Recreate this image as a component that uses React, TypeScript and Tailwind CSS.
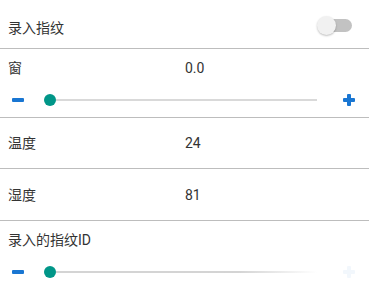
import React from 'react';

const font = "font-['Roboto','Noto_Sans_CJK_SC',sans-serif]";

const Minus: React.FC = () => (
  <div className="w-[12px] h-[4px] rounded-[1px] bg-[#1976d2]" />
);

const Plus: React.FC<{ faded?: boolean }> = ({ faded }) => (
  <svg width="12" height="12" viewBox="0 0 12 12" className={faded ? 'opacity-5' : ''}>
    <rect x="4" y="0" width="4" height="12" rx="1" fill="#1976d2" />
    <rect x="0" y="4" width="12" height="4" rx="1" fill="#1976d2" />
  </svg>
);

const Slider: React.FC<{ faded?: boolean }> = ({ faded }) => (
  <div className="flex items-center h-[16px] pl-[12px] pr-[14px]">
    <Minus />
    <div className="flex-1 flex items-center ml-[20px] mr-[26px]">
      <div className="w-[12px] h-[12px] rounded-full bg-[#009688] shrink-0" />
      <div
        className={`flex-1 h-[2px] ${
          faded ? 'bg-gradient-to-r from-[#d4d4d4] from-70% to-transparent' : 'bg-[#d9d9d9]'
        }`}
      />
    </div>
    <Plus faded={faded} />
  </div>
);

const ValueRow: React.FC<{ label: string; value: string; h: string }> = ({ label, value, h }) => (
  <div className={`flex items-center border-b border-[#bdbdbd] ${h}`}>
    <div className="w-[185px] pl-[8px]">{label}</div>
    <div>{value}</div>
  </div>
);

export default function App() {
  return (
    <div className={`w-[369px] h-[287px] overflow-hidden bg-white text-[14px] leading-[20px] text-[#333333] ${font}`}>
      {/* 录入指纹 switch */}
      <div className="flex items-center justify-between h-[49px] pt-[8px] pl-[8px] pr-[17px] border-b border-[#bdbdbd]">
        <div>录入指纹</div>
        <div className="relative w-[35px] h-[20px] -mt-[6px] flex items-center">
          <div className="absolute right-0 w-[26px] h-[13px] rounded-full bg-[#c2c2c2]" />
          <div className="absolute left-0 w-[19px] h-[19px] rounded-full bg-[#f1f1f1] shadow-[0_1px_2px_rgba(0,0,0,0.25)]" />
        </div>
      </div>

      {/* 窗 */}
      <div className="h-[69px] pt-[9px] border-b border-[#bdbdbd]">
        <div className="flex">
          <div className="w-[185px] pl-[8px]">窗</div>
          <div>0.0</div>
        </div>
        <div className="mt-[14px]">
          <Slider />
        </div>
      </div>

      <ValueRow label="温度" value="24" h="h-[51px]" />
      <ValueRow label="湿度" value="81" h="h-[52px]" />

      {/* 录入的指纹ID */}
      <div className="pt-[9px]">
        <div className="pl-[8px]">录入的指纹ID</div>
        <div className="mt-[14px]">
          <Slider faded />
        </div>
      </div>
    </div>
  );
}
